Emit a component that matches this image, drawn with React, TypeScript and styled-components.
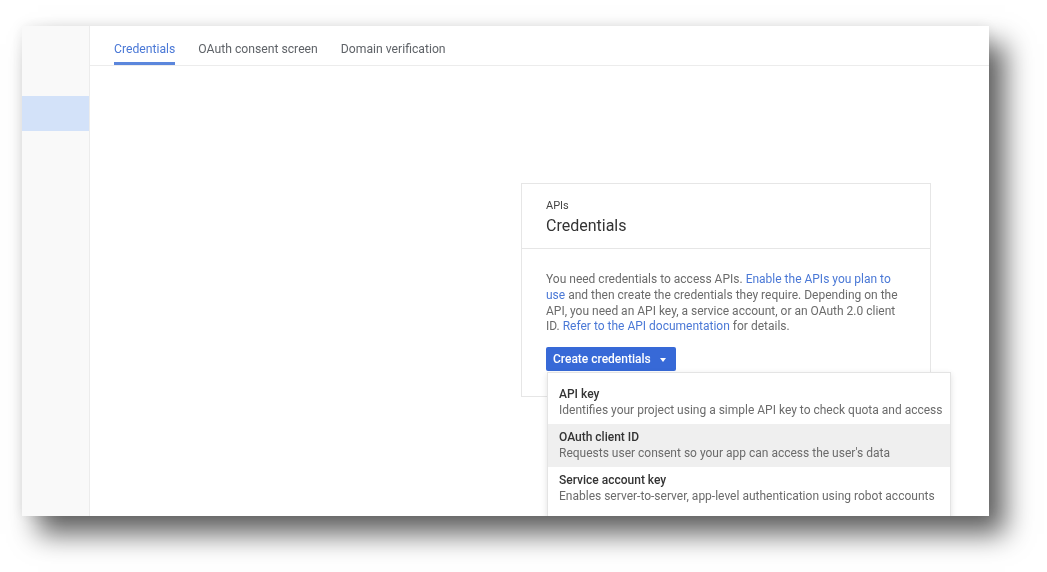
import React from 'react';
import styled, { createGlobalStyle } from 'styled-components';

const GlobalStyle = createGlobalStyle`
  html, body {
    margin: 0;
    padding: 0;
    background: #ffffff;
  }
  body {
    font-family: Roboto, "Noto Sans", "Liberation Sans", sans-serif;
  }
`;

const Page = styled.div`
  width: 1047px;
  height: 572px;
  box-sizing: border-box;
  padding: 26px 58px 56px 22px;
  overflow: hidden;
`;

const Frame = styled.div`
  display: flex;
  width: 100%;
  height: 100%;
  background: #fff;
  overflow: hidden;
  box-shadow: 16px 18px 26px rgba(0, 0, 0, 0.62), 0 0 14px rgba(0, 0, 0, 0.08);
  filter: blur(0.45px);
`;

const Sidebar = styled.nav`
  width: 68px;
  flex-shrink: 0;
  background: #f9f9f9;
  border-right: 1px solid #ececec;
  padding-top: 70px;
  box-sizing: border-box;
`;

const SideItem = styled.div<{ $active?: boolean }>`
  height: 35px;
  background: ${(p) => (p.$active ? '#d3e2f9' : 'transparent')};
`;

const Main = styled.main`
  flex: 1;
  display: flex;
  flex-direction: column;
  min-width: 0;
`;

const TabBar = styled.div`
  display: flex;
  height: 40px;
  padding-left: 24px;
  border-bottom: 1px solid #ececec;
  box-sizing: border-box;
`;

const Tab = styled.div<{ $active?: boolean }>`
  display: flex;
  align-items: center;
  margin-right: 23px;
  padding-top: 9px;
  font-size: 12.2px;
  color: ${(p) => (p.$active ? '#4a78d6' : '#5f6368')};
  border-bottom: 3px solid ${(p) => (p.$active ? '#5b86dc' : 'transparent')};
  box-sizing: border-box;
`;

const Content = styled.div`
  padding: 117px 0 0 431px;
`;

const Card = styled.section`
  width: 410px;
  border: 1px solid #e6e6e6;
  box-sizing: border-box;
  background: #fff;
`;

const CardHeader = styled.header`
  padding: 15px 24px 11px;
  border-bottom: 1px solid #e6e6e6;
`;

const Eyebrow = styled.div`
  font-size: 11px;
  line-height: 14px;
  color: #444;
`;

const Title = styled.h2`
  margin: 2px 0 0;
  font-size: 16px;
  line-height: 22px;
  font-weight: 400;
  color: #333;
`;

const CardBody = styled.div`
  padding: 23px 24px 25px;
`;

const Text = styled.p`
  margin: 0;
  font-size: 12px;
  line-height: 15.8px;
  color: #6b6b6b;
`;

const Link = styled.a`
  color: #4a78d6;
  text-decoration: none;
`;

const ButtonWrap = styled.div`
  position: relative;
  margin-top: 12px;
  width: fit-content;
`;

const PrimaryButton = styled.button`
  display: flex;
  align-items: center;
  gap: 9px;
  height: 24px;
  width: 130px;
  padding: 0 0 0 7px;
  border: none;
  border-radius: 2px;
  background: #3769d7;
  color: #fff;
  font-family: inherit;
  font-size: 12px;
  font-weight: 500;
  cursor: pointer;
`;

const Caret = styled.span`
  width: 0;
  height: 0;
  border-left: 3.5px solid transparent;
  border-right: 3.5px solid transparent;
  border-top: 4px solid #fff;
  margin-top: 1px;
`;

const Menu = styled.ul`
  position: absolute;
  top: calc(100% + 1px);
  left: 1px;
  width: 404px;
  margin: 0;
  padding: 8px 0 20px;
  list-style: none;
  background: #fff;
  border: 1px solid #e4e4e4;
  box-sizing: border-box;
  box-shadow: 0 2px 6px rgba(0, 0, 0, 0.12);
`;

const MenuItem = styled.li<{ $hover?: boolean }>`
  padding: 5px 11px 6px;
  background: ${(p) => (p.$hover ? '#efefef' : 'transparent')};
`;

const ItemTitle = styled.div`
  font-size: 12px;
  line-height: 16px;
  font-weight: 500;
  color: #333;
`;

const ItemDesc = styled.div`
  font-size: 12px;
  line-height: 16px;
  color: #6b6b6b;
  white-space: nowrap;
`;

const menuItems = [
  {
    title: 'API key',
    desc: 'Identifies your project using a simple API key to check quota and access',
  },
  {
    title: 'OAuth client ID',
    desc: "Requests user consent so your app can access the user's data",
    hover: true,
  },
  {
    title: 'Service account key',
    desc: 'Enables server-to-server, app-level authentication using robot accounts',
  },
];

export default function App() {
  return (
    <>
      <GlobalStyle />
      <Page>
        <Frame>
          <Sidebar>
            <SideItem $active />
          </Sidebar>
          <Main>
            <TabBar>
              <Tab $active>Credentials</Tab>
              <Tab>OAuth consent screen</Tab>
              <Tab>Domain verification</Tab>
            </TabBar>
            <Content>
              <Card>
                <CardHeader>
                  <Eyebrow>APIs</Eyebrow>
                  <Title>Credentials</Title>
                </CardHeader>
                <CardBody>
                  <Text>
                    You need credentials to access APIs.{' '}
                    <Link href="#">Enable the APIs you plan to use</Link> and then create the
                    credentials they require. Depending on the API, you need an API key, a service
                    account, or an OAuth 2.0 client ID.{' '}
                    <Link href="#">Refer to the API documentation</Link> for details.
                  </Text>
                  <ButtonWrap>
                    <PrimaryButton>
                      Create credentials
                      <Caret />
                    </PrimaryButton>
                    <Menu>
                      {menuItems.map((item) => (
                        <MenuItem key={item.title} $hover={item.hover}>
                          <ItemTitle>{item.title}</ItemTitle>
                          <ItemDesc>{item.desc}</ItemDesc>
                        </MenuItem>
                      ))}
                    </Menu>
                  </ButtonWrap>
                </CardBody>
              </Card>
            </Content>
          </Main>
        </Frame>
      </Page>
    </>
  );
}
